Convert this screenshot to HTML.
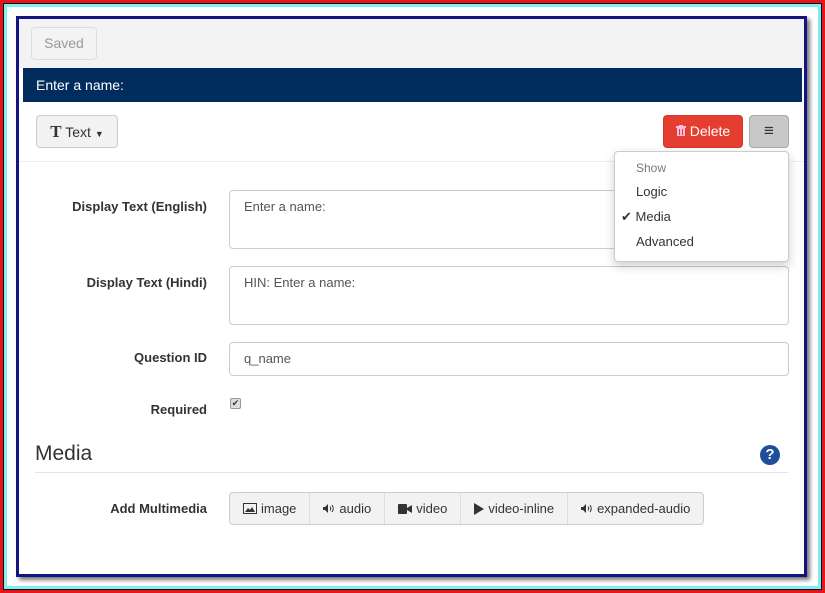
<!DOCTYPE html>
<html><head><style>
*{box-sizing:border-box;margin:0;padding:0}
body{width:825px;height:593px;background:#fff;font-family:"Liberation Sans",sans-serif;position:relative;overflow:hidden;font-size:13px;color:#333}
.o1{position:absolute;left:0;top:0;width:825px;height:593px;border:3px solid #e8141c}
.o2{position:absolute;left:3px;top:3px;width:819px;height:587px;border:1px solid #111}
.o3{position:absolute;left:4px;top:4px;width:817px;height:585px;border:3px solid #7ff0f0}
.frame{position:absolute;left:16px;top:16px;width:791px;height:561px;border:3px solid #141480;box-shadow:3px 3px 4px #777;background:#fff;overflow:hidden}
.top{position:absolute;left:0;top:0;width:785px;height:49px;background:#f3f3f3}
.saved{position:absolute;left:12px;top:8px;width:66px;height:33px;border:1px solid #ddd;border-radius:4px;color:#999;font-size:14px;text-align:center;line-height:31px;background:#f3f3f3}
.bar{position:absolute;left:4px;top:49px;width:779px;height:34px;background:#002d5e;color:#fff;font-size:14px;line-height:34px;padding-left:13px}
.btn{position:absolute;border:1px solid #ccc;border-radius:4px;background:#f2f2f2;font-size:14px;text-align:center}
.lbl{position:absolute;right:597px;font-weight:bold;font-size:13px;color:#333;text-align:right;width:200px}
.inp{position:absolute;left:210px;width:560px;border:1px solid #ccc;border-radius:4px;color:#555;font-size:13px;padding:8px 14px;background:#fff}
.menu{position:absolute;left:595px;top:132px;width:175px;height:111px;background:#fff;border:1px solid #ccc;border-radius:4px;box-shadow:0 4px 10px rgba(0,0,0,.2);font-size:13px}
.menu div{position:absolute;left:21px}
.mg{position:absolute;left:210px;top:473px;height:33px;display:flex;border:1px solid #ccc;border-radius:4px;background:#f2f2f2}
.mg span{padding:0 13px 0 13px;line-height:31px;font-size:13px;border-right:1px solid #ddd;color:#333;display:flex;align-items:center;gap:4px}
.mg span:last-child{border-right:none}
svg{display:inline-block}
</style></head><body>
<div class="o1"></div><div class="o2"></div><div class="o3"></div>
<div class="frame">
<div class="top"><div class="saved">Saved</div></div>
<div class="bar">Enter a name:</div>
<div class="btn" style="left:17px;top:96px;width:82px;height:33px;line-height:31px"><b style="font-family:'Liberation Serif',serif;font-size:17px">T</b> Text <span style="font-size:9px">▼</span></div>
<div class="btn" style="left:644px;top:96px;width:80px;height:33px;line-height:31px;background:#e53d2f;border-color:#d33a2c;color:#fff"><svg width="10" height="11" viewBox="0 0 10 11"><rect x="0" y="1" width="10" height="2" fill="#fbd"/><rect x="3" y="0" width="4" height="2" fill="#fbd"/><rect x="1" y="3" width="8" height="8" fill="#fbd"/><rect x="3" y="4" width="1" height="6" fill="#e53d2f"/><rect x="6" y="4" width="1" height="6" fill="#e53d2f"/></svg> Delete</div>
<div class="btn" style="left:730px;top:96px;width:40px;height:33px;line-height:30px;background:#c8c8c8;border-color:#aaa;font-size:17px">≡</div>
<div style="position:absolute;left:0;top:142px;width:785px;border-top:1px solid #eee"></div>
<div class="lbl" style="top:180px">Display Text (English)</div>
<div class="inp" style="top:171px;height:59px">Enter a name:</div>
<div class="lbl" style="top:256px">Display Text (Hindi)</div>
<div class="inp" style="top:247px;height:59px">HIN: Enter a name:</div>
<div class="lbl" style="top:331px">Question ID</div>
<div class="inp" style="top:323px;height:34px">q_name</div>
<div class="lbl" style="top:383px">Required</div>
<div style="position:absolute;left:211px;top:379px;width:11px;height:11px;border:1px solid #999;border-radius:2px;background:#ddd;font-size:9px;line-height:9px;text-align:center">✔</div>
<div style="position:absolute;left:16px;top:423px;font-size:21px;color:#333">Media</div>
<div style="position:absolute;left:16px;top:453px;width:753px;border-top:1px solid #e5e5e5"></div>
<div style="position:absolute;left:741px;top:426px;width:20px;height:20px;border-radius:50%;background:#1f4e9a;color:#fff;font-weight:bold;font-size:15px;text-align:center;line-height:20px">?</div>
<div class="lbl" style="top:482px">Add Multimedia</div>
<div class="mg">
<span><svg width="14" height="11" viewBox="0 0 14 11"><rect x=".5" y=".5" width="13" height="10" fill="none" stroke="#333"/><path d="M2 9 L5 5 L7 7 L9 4 L12 9Z" fill="#333"/></svg>image</span>
<span><svg width="12" height="11" viewBox="0 0 12 11"><path d="M0 4h2l3-3v9L2 7H0z" fill="#333"/><path d="M7 3.5q1.5 2 0 4M9 2q2.5 3.5 0 7" fill="none" stroke="#333"/></svg>audio</span>
<span><svg width="14" height="10" viewBox="0 0 14 10"><rect x="0" y="0" width="9" height="10" rx="1" fill="#333"/><path d="M9 4l5-3v8l-5-3z" fill="#333"/></svg>video</span>
<span><svg width="10" height="12" viewBox="0 0 10 12"><path d="M0 0l10 6-10 6z" fill="#333"/></svg>video-inline</span>
<span><svg width="12" height="11" viewBox="0 0 12 11"><path d="M0 4h2l3-3v9L2 7H0z" fill="#333"/><path d="M7 3.5q1.5 2 0 4M9 2q2.5 3.5 0 7" fill="none" stroke="#333"/></svg>expanded-audio</span>
</div>
<div class="menu">
<div style="top:9px;color:#777;font-size:12px">Show</div>
<div style="top:32px">Logic</div>
<div style="top:57px;left:6px">✔ Media</div>
<div style="top:82px">Advanced</div>
</div>
</div>
</body></html>
